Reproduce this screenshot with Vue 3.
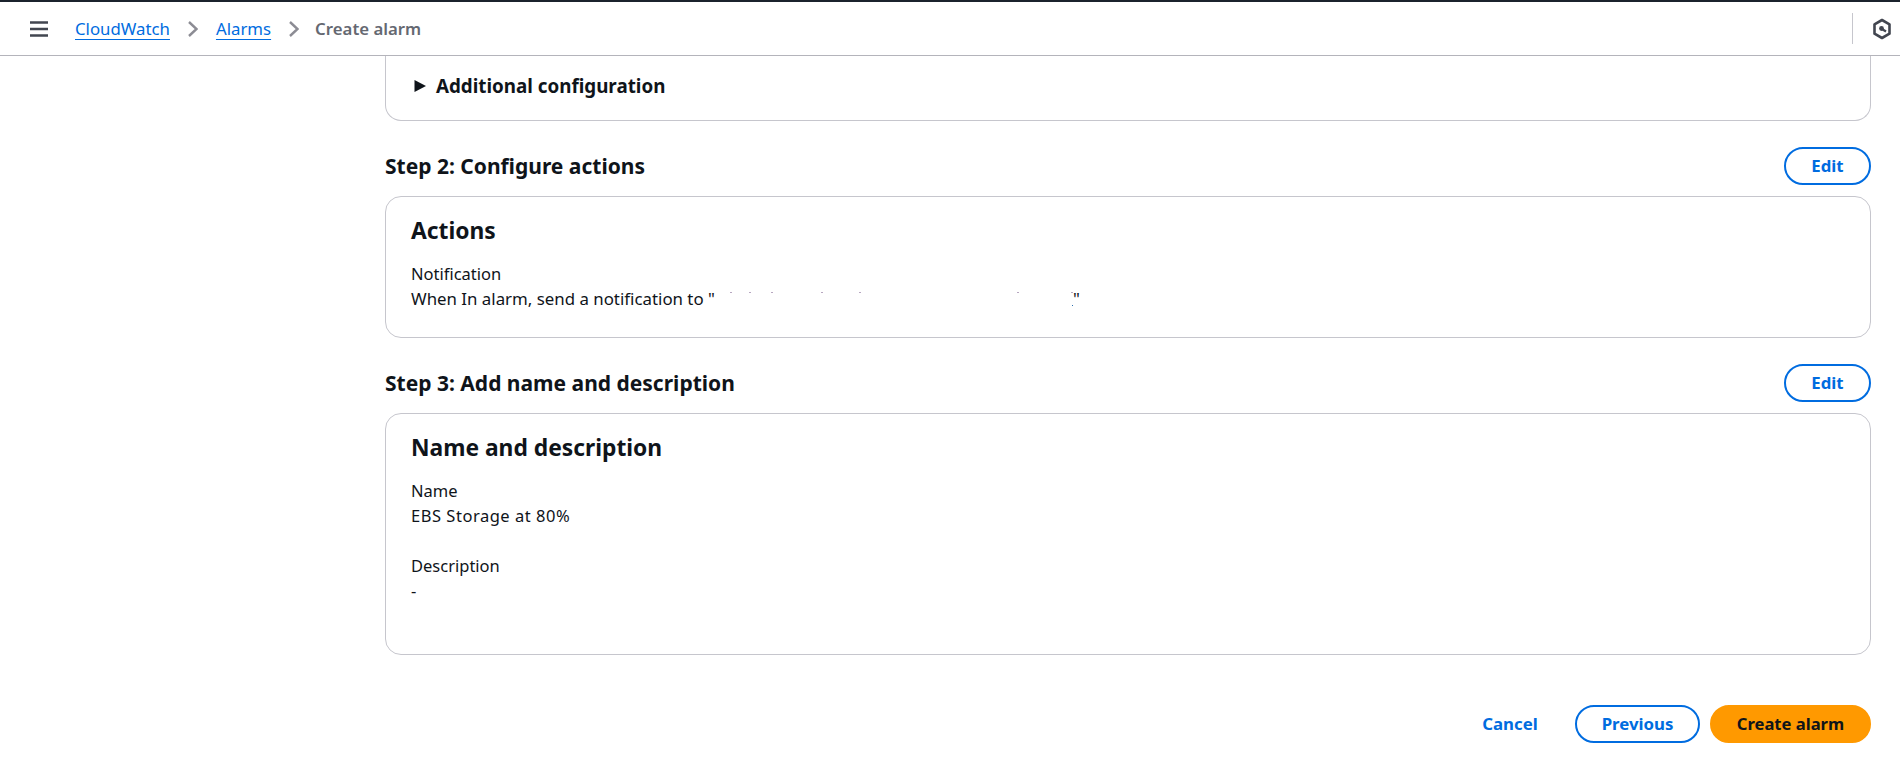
<script setup>
const crumbs = ['CloudWatch', 'Alarms']
const specks = [15, 34, 56, 106, 144, 302, 356]
</script>

<template>
  <div class="page">
    <header class="topbar">
      <svg class="menu" width="18" height="16" viewBox="0 0 18 16"><path d="M0 1.500h18M0 8h18M0 14.500h18" stroke="#424650" stroke-width="2.600" fill="none"/></svg>
      <nav class="crumbs">
        <template v-for="c in crumbs" :key="c">
          <a class="crumb-link">{{ c }}</a>
          <svg class="sep" width="10" height="16" viewBox="0 0 10 16"><path d="M1 1 8.500 8 1 15" stroke="#8c8c94" stroke-width="2.400" fill="none"/></svg>
        </template>
        <span class="crumb-current">Create alarm</span>
      </nav>
      <div class="top-right">
        <svg width="20" height="22" viewBox="0 0 20 22"><path d="M10 2 17.500 6.300v9.400L10 20l-7.500-4.300V6.300Z" stroke="#424650" stroke-width="2.600" fill="none" stroke-linejoin="round"/><circle cx="9.500" cy="10.500" r="2.400" fill="#424650"/><path d="M10 11l4 2.500" stroke="#424650" stroke-width="2.200"/></svg>
      </div>
    </header>

    <main class="content">
      <section class="card card-cut">
        <div class="expander">
          <svg width="12" height="14" viewBox="0 0 12 14"><path d="M0.500 1 12 7 0.500 13Z" fill="#0f141a"/></svg>
          <span>Additional configuration</span>
        </div>
      </section>

      <div class="step-head">
        <h2>Step 2: Configure actions</h2>
        <button class="btn btn-outline btn-edit">Edit</button>
      </div>
      <section class="card card-actions">
        <h3>Actions</h3>
        <div class="field">
          <div>Notification</div>
          <div class="notice">When In alarm, send a notification to "<svg class="redacted" width="358" height="20" viewBox="0 0 358 20"><rect v-for="s in specks" :key="s" :x="s" y="1" width="2" height="1" fill="#b7a7c0"/><rect x="357" y="14" width="1" height="1" fill="#2a6fb0"/></svg>"</div>
        </div>
      </section>

      <div class="step-head">
        <h2>Step 3: Add name and description</h2>
        <button class="btn btn-outline btn-edit">Edit</button>
      </div>
      <section class="card card-name">
        <h3>Name and description</h3>
        <div class="field">
          <div>Name</div>
          <div class="value-wide">EBS Storage at 80%</div>
        </div>
        <div class="field field-gap">
          <div>Description</div>
          <div>-</div>
        </div>
      </section>

      <div class="actions">
        <button class="btn btn-link">Cancel</button>
        <button class="btn btn-outline btn-prev">Previous</button>
        <button class="btn btn-primary">Create alarm</button>
      </div>
    </main>
  </div>
</template>

<style scoped>
.page {
  height: 777px;
  overflow: hidden;
  background: #fff;
  color: #0f141a;
  font-family: "Noto Sans", sans-serif;
  font-size: 14px;
  line-height: 20px;
}
.topbar {
  height: 53px;
  border-top: 2px solid #1b232d;
  border-bottom: 1px solid #b4b4bb;
  display: flex;
  align-items: center;
  padding-left: 30px;
}
.menu { margin-right: 27px; }
.crumbs { display: flex; align-items: center; font-size: 16.800px; }
.crumb-link { color: #006ce0; text-decoration: underline; text-underline-offset: 4px; }
.sep { margin: 0 18px; }
.crumb-current { color: #656871; font-weight: 600; margin-left: -2px; }
.top-right {
  margin-left: auto;
  width: 48px;
  height: 31px;
  border-left: 1px solid #c6c6cd;
  display: flex;
  align-items: center;
  justify-content: center;
  box-sizing: border-box;
  padding-left: 10px;
}
.content {
  width: 1486px;
  margin-left: 385px;
}
.card {
  border: 1px solid #c6c6cd;
  border-radius: 16px;
  box-sizing: border-box;
  padding: 20px 25px;
}
.card-cut {
  height: 65px;
  border-top: none;
  border-radius: 0 0 16px 16px;
  padding: 0 28px;
}
.expander {
  display: flex;
  align-items: center;
  gap: 10px;
  padding-top: 18px;
  font-size: 18.800px;
  line-height: 24px;
  font-weight: 700;
}
.step-head {
  display: flex;
  align-items: center;
  justify-content: space-between;
  height: 38px;
  margin: 26px 0 11px;
}
h2 { margin: 0; font-size: 21px; font-weight: 700; line-height: 24px; }
h3 { margin: 0 0 16px; font-size: 22.800px; font-weight: 700; line-height: 28px; }
.card-actions { height: 142px; }
.card-name { height: 242px; }
.field { font-size: 16.500px; line-height: 25px; }
.notice { font-size: 16.850px; }
.value-wide { letter-spacing: 0.520px; }
.field-gap { margin-top: 25px; }
.redacted { vertical-align: top; margin-top: 5px; }
.btn {
  font-family: inherit;
  font-size: 16.800px;
  font-weight: 700;
  line-height: 20px;
  height: 38px;
  border-radius: 19px;
  box-sizing: border-box;
  cursor: pointer;
  background: #fff;
  color: #006ce0;
  border: 2px solid #006ce0;
  padding: 0;
}
.btn-edit { width: 87px; }
.actions {
  margin-top: 50px;
  display: flex;
  justify-content: flex-end;
  align-items: center;
}
.btn-link { border: none; background: none; width: 70px; margin-right: 30px; }
.btn-prev { width: 125px; margin-right: 10px; }
.btn-primary { width: 161px; background: #ff9900; border-color: #ff9900; color: #0f141a; font-size: 16.600px; }
</style>
